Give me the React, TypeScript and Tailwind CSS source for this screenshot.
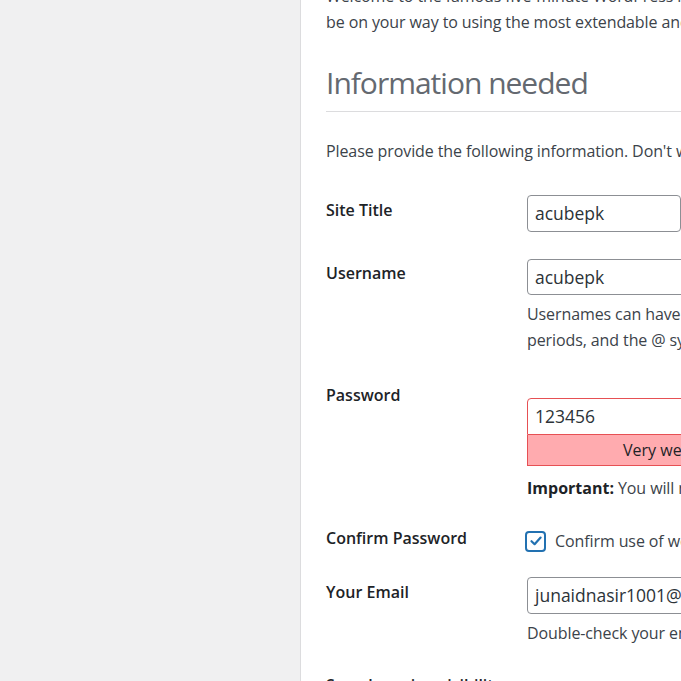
import React from "react";

const font = { fontFamily: '"Open Sans", "Noto Sans", Arial, sans-serif' };

function Label({ children, pt = "pt-0" }: { children: React.ReactNode; pt?: string }) {
  return (
    <div className={`w-[201px] shrink-0 font-semibold text-[#1d2327] leading-[26px] tracking-normal ${pt}`}>{children}</div>
  );
}

function Input({ children, h = "h-[37px]" }: { children: React.ReactNode; h?: string }) {
  return (
    <div className={`${h} w-[420px] border border-[#8c8f94] rounded-[4px] px-[7px] flex items-center text-[#2c3338] text-[17.5px] tracking-normal`}>
      {children}
    </div>
  );
}

export default function App() {
  return (
    <div className="w-[681px] h-[681px] overflow-hidden bg-[#f0f0f1] flex text-[16px]" style={font}>
      <div className="w-[300px] shrink-0" />
      <div className="flex-1 bg-white border-l border-[#dcdcde] pl-[25px] whitespace-nowrap text-[#3c434a] overflow-hidden tracking-[-0.1px]">
        <p className="leading-[26px] -mt-[17px]">
          Welcome to the famous five-minute WordPress installation process! Just fill in the information below and you&apos;ll
          <br />
          be on your way to using the most extendable and powerful personal publishing platform in the world.
        </p>
        <h1 className="mt-[30px] text-[30px] leading-[36px] text-[#646970] font-normal tracking-[-1px] pb-[10px] border-b border-[#dcdcde] w-[800px]">
          Information needed
        </h1>
        <p className="mt-[26px] leading-[26px]">
          Please provide the following information. Don&apos;t worry, you can always change these settings later.
        </p>

        <div className="mt-[31px] flex">
          <Label pt="pt-[2px]">Site Title</Label>
          <Input>acubepk</Input>
        </div>

        <div className="mt-[27px] flex">
          <Label pt="pt-[1px]">Username</Label>
          <div>
            <Input h="h-[36px]">acubepk</Input>
            <p className="mt-[6px] leading-[26px]">
              Usernames can have only alphanumeric characters, spaces, underscores, hyphens,
              <br />
              periods, and the @ symbol.
            </p>
          </div>
        </div>

        <div className="mt-[29px] flex">
          <Label>Password</Label>
          <div className="pt-[16px]">
            <div className="w-[268px]">
              <div className="h-[37px] border border-[#e65054] rounded-t-[4px] px-[7px] flex items-center text-[#2c3338] text-[17.5px] tracking-normal">123456</div>
              <div className="h-[31px] bg-[#ffabaf] border border-t-0 border-[#e65054] flex items-center justify-center text-[#1d2327] tracking-normal">Very weak</div>
            </div>
            <p className="mt-[9px] leading-[26px]">
              <span className="font-bold text-[#1d2327] tracking-normal">Important:</span> You will need this password to log in. Please store it in a secure location.
            </p>
          </div>
        </div>

        <div className="mt-[24px] flex">
          <Label>Confirm Password</Label>
          <div className="flex items-center pt-[3px] -ml-[2px]">
            <div className="w-[21px] h-[21px] border-2 border-[#2271b1] rounded-[4px] flex items-center justify-center">
              <svg width="16" height="16" viewBox="0 0 16 16" fill="none">
                <path d="M3.5 8.2 L6.6 11.2 L12.6 4.6" stroke="#2271b1" strokeWidth="2.2" strokeLinecap="round" strokeLinejoin="round" />
              </svg>
            </div>
            <span className="ml-[9px] leading-[26px]">Confirm use of weak password</span>
          </div>
        </div>

        <div className="mt-[23px] flex">
          <Label pt="pt-[2px]">Your Email</Label>
          <div>
            <Input>junaidnasir1001@gmail.com</Input>
            <p className="mt-[6px] leading-[26px]">Double-check your email address before continuing.</p>
          </div>
        </div>

        <div className="mt-[26px] flex">
          <Label>Search engine visibility</Label>
        </div>
      </div>
    </div>
  );
}
